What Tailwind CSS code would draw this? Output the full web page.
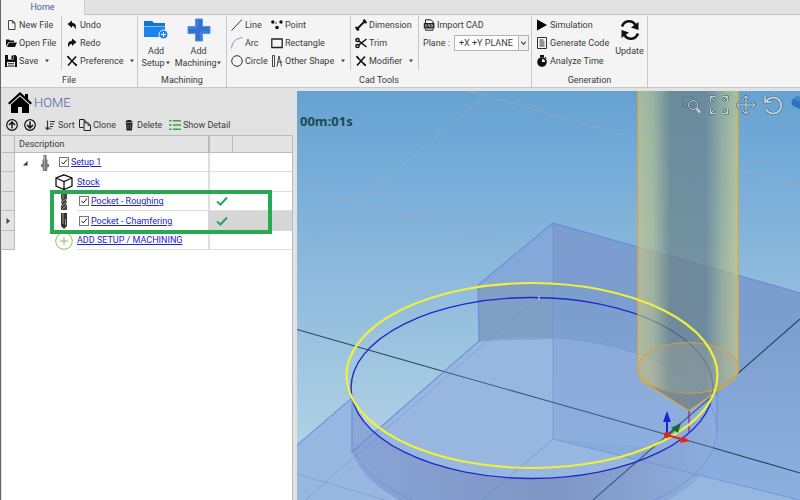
<!DOCTYPE html>
<html lang="en">
<head>
  <meta charset="UTF-8" />
  <meta name="viewport" content="width=device-width, initial-scale=1.0" />
  <title>CAM Workspace</title>
  <script src="https://cdn.jsdelivr.net/npm/@tailwindcss/browser@4"></script>
</head>
<body class="h-screen flex flex-col overflow-hidden bg-[#e2e2e2] border-l border-[#666] font-['Roboto','Noto_Sans',sans-serif] text-[9px] leading-3 text-[#3a3a3a]">
  <!-- Shared symbols -->
  <svg class="hidden">
    <symbol id="caret" viewBox="0 0 6 4"><path d="M1 0.5h4L3 3.2z" fill="#444" /></symbol>
    <symbol id="tools" viewBox="0 0 12 12"><path d="M2 10.5 10 1.500M2 2l8.500 8.500" stroke="#111" stroke-width="1.6" fill="none" /><path d="M.8 1.500 2.500.8 4 3 3 4zM8 9l1-1 2.300 2-1 1.300z" fill="#111" /></symbol>
    <symbol id="tick" viewBox="0 0 12 10"><path d="M1 5.500 4.500 8.500 11 1.500" stroke="#27a567" stroke-width="2" fill="none" /></symbol>
    <symbol id="check" viewBox="0 0 10 10"><path d="M2.500 5 4.300 7 8 2.500" stroke="#222" fill="none" /></symbol>
    <symbol id="cad" viewBox="0 0 12 12"><path d="M2.500 4V.8h5.500L10 2.800V4M2.500 10v1.200h7.500V10" fill="none" stroke="#222" /><path d="M.8 4h10.600v5.500H.8z" fill="#222" /><path d="M4 5.700H2.500v2H4M5.200 8V5.500h1.300V8M8 5.500v2.300h1.500V5.700z" stroke="#ddd" stroke-width=".6" fill="none" /></symbol>
  </svg>

  <!-- Tabs -->
  <nav class="flex h-[15px] shrink-0 bg-[#e2e2e2]">
    <a href="#" class="w-[84px] border-r border-[#ccc] bg-[#f4f4f4] text-center leading-[15px] text-[#3f5c96] z-10">Home</a>
    <div class="flex-1 border-b border-[#c4c4c4]"></div>
  </nav>

  <!-- Ribbon -->
  <header class="flex h-[73px] shrink-0 bg-[#f4f4f4] border-b border-[#c8c8c8]">
    <!-- File -->
    <section class="flex w-[137px] mt-px flex-col border-r border-[#c8c8c8]">
      <div class="flex h-[54px]">
        <div class="w-[61px] border-r border-[#c8c8c8] pl-1 grid grid-rows-3">
          <button class="flex items-center gap-0.5"><svg class="w-3 h-3" viewBox="0 0 12 12"><path d="M3.500 1.500h4L10 4v6.500H3.500zM7.500 1.500V4H10" fill="none" stroke="#444" /></svg>New File</button>
          <button class="flex items-center gap-0.5"><svg class="w-3 h-3" viewBox="0 0 12 12"><path d="M1 9.500V2.500h3l1 1h4V5H3.500zM2 10l2-4.500h8L10 10z" fill="#111" /></svg>Open File</button>
          <button class="flex items-center gap-0.5"><svg class="w-3 h-3" viewBox="0 0 12 12"><path d="M0 0h10.500L12 1.500V12H0z" fill="#111" /><path d="M3 0h5.500v4.500H3zM2 7h8v4.500H2z" fill="#f4f4f4" /><path d="M6.500.5h1.500V4H6.500zM3 8h6v.8H3zM3 9.800h6v.8H3z" fill="#111" /></svg>Save<svg class="w-1.5 h-1 ml-1"><use href="#caret" /></svg></button>
        </div>
        <div class="pl-1 grid grid-rows-3">
          <button class="flex items-center gap-0.5"><svg class="w-3 h-3" viewBox="0 0 12 12"><path d="M1.500 5 6 1.500v2.300c3 .2 4.500 2 3.800 5.700L9 10c0-2-1-3-3-3v2z" fill="#111" /></svg>Undo</button>
          <button class="flex items-center gap-0.5"><svg class="w-3 h-3" viewBox="0 0 12 12"><path d="M10.500 5 6 1.500v2.300C3 4 1.500 5.800 2.200 9.500L3 10c0-2 1-3 3-3v2z" fill="#111" /></svg>Redo</button>
          <button class="flex items-center gap-0.5"><svg class="w-3 h-3"><use href="#tools" /></svg>Preference<svg class="w-1.5 h-1 ml-1"><use href="#caret" /></svg></button>
        </div>
      </div>
      <div class="h-[17px] pt-1 text-center">File</div>
    </section>

    <!-- Machining -->
    <section class="flex w-[89px] mt-px flex-col border-r border-[#c8c8c8]">
      <div class="flex h-[54px] justify-center gap-1">
        <button class="flex flex-col items-center pt-0.5">
          <svg class="w-6 h-6 mb-[3px] shrink-0" viewBox="0 0 24 24"><path d="M0 3h8l2 2h11v3H0z" fill="#1173d8" /><path d="M0 8.500h21V19H0z" fill="#1a83f0" /><circle cx="19.500" cy="16.500" r="4.500" fill="#1a83f0" stroke="#f4f4f4" /><path d="M19.500 14v5M17 16.500h5" stroke="#fff" /></svg>
          <span>Add</span><span class="flex items-center">Setup<svg class="w-1.5 h-1"><use href="#caret" /></svg></span>
        </button>
        <button class="flex flex-col items-center pt-0.5">
          <svg class="w-6 h-6 mb-[3px] shrink-0" viewBox="0 0 24 24"><path d="M8.500 1h7v7.500H23v7h-7.500V23h-7v-7.500H1v-7h7.500z" fill="#3272d6" stroke="#5b8fe0" /><path d="M10 2v8H2M22 14h-8v8" fill="none" stroke="#4f8ae6" /></svg>
          <span>Add</span><span class="flex items-center">Machining<svg class="w-1.5 h-1"><use href="#caret" /></svg></span>
        </button>
      </div>
      <div class="h-[17px] pt-1 text-center">Machining</div>
    </section>

    <!-- Cad Tools -->
    <section class="flex w-[305px] mt-px flex-col border-r border-[#c8c8c8]">
      <div class="flex h-[54px]">
        <div class="w-10 pl-1 grid grid-rows-3">
          <button class="flex items-center gap-0.5"><svg class="w-3 h-3" viewBox="0 0 12 12"><path d="M.5 11.500 11 .5" stroke="#333" /></svg>Line</button>
          <button class="flex items-center gap-0.5"><svg class="w-3 h-3" viewBox="0 0 12 12"><path d="M.5 11.500C1 5 5 1 11.500.8" stroke="#8b93c0" fill="none" /></svg>Arc</button>
          <button class="flex items-center gap-0.5"><svg class="w-3 h-3" viewBox="0 0 12 12"><circle cx="6" cy="6" r="5.300" stroke="#333" fill="none" /></svg>Circle</button>
        </div>
        <div class="w-[84px] pl-1 border-r border-[#c8c8c8] grid grid-rows-3">
          <button class="flex items-center gap-0.5"><svg class="w-3 h-3" viewBox="0 0 12 12"><g fill="#111"><circle cx="1.800" cy="3" r="1.700" /><circle cx="10" cy="3" r="1.700" /><circle cx="6" cy="8.500" r="1.800" /><circle cx="5" cy="4" r=".7" /></g></svg>Point</button>
          <button class="flex items-center gap-0.5"><svg class="w-3 h-3" viewBox="0 0 12 12"><path d="M.8 2h10.400v8.500H.8z" stroke="#222" stroke-width="1.300" fill="none" /></svg>Rectangle</button>
          <button class="flex items-center gap-0.5"><svg class="w-3 h-3" viewBox="0 0 12 12"><path d="M1.500.5h2v11h-2zM6 11.500 8 1l2.500 10.500M6.500 7h5" stroke="#444" fill="none" /></svg>Other Shape<svg class="w-1.5 h-1 ml-1"><use href="#caret" /></svg></button>
        </div>
        <div class="w-[68px] pl-1 border-r border-[#c8c8c8] grid grid-rows-3">
          <button class="flex items-center gap-0.5"><svg class="w-3 h-3" viewBox="0 0 12 12"><path d="M2.500 9.500l7-7" stroke="#111" stroke-width="1.800" /><circle cx="9.300" cy="1.800" r="1.500" fill="#111" /><circle cx="10.500" cy="3.200" r="1.300" fill="#111" /><circle cx="1.500" cy="8.800" r="1.300" fill="#111" /><circle cx="2.800" cy="10.300" r="1.500" fill="#111" /></svg>Dimension</button>
          <button class="flex items-center gap-0.5"><svg class="w-3 h-3" viewBox="0 0 12 12"><g fill="none" stroke="#111" stroke-width="1.500"><circle cx="2.500" cy="3" r="1.600" /><circle cx="2.500" cy="9" r="1.600" /><path d="M4 4.200 11.500 10M4 7.800 11.500 2" /></g></svg>Trim</button>
          <button class="flex items-center gap-0.5"><svg class="w-3 h-3"><use href="#tools" /></svg>Modifier<svg class="w-1.5 h-1 ml-1"><use href="#caret" /></svg></button>
        </div>
        <div class="flex-1 pl-1 grid grid-rows-3">
          <button class="flex items-center gap-0.5"><svg class="w-3 h-3"><use href="#cad" /></svg>Import CAD</button>
          <div class="flex items-center">
            <label for="plane" class="w-[31px]">Plane :</label>
            <div class="relative flex h-4 w-[75px]">
              <select id="plane" class="w-full appearance-none border border-[#b4b4b4] bg-white pl-1 leading-3"><option>+X +Y PLANE</option></select>
              <svg class="absolute right-px top-px h-3.5 w-2.5 border-l border-[#b4b4b4] bg-[#f0f0f0] pointer-events-none" viewBox="0 0 10 14"><path d="M2.500 5.500 5 8.500l2.500-3" fill="none" stroke="#444" stroke-width="1.200" /></svg>
            </div>
          </div>
        </div>
      </div>
      <div class="h-[17px] pt-1 text-center">Cad Tools</div>
    </section>

    <!-- Generation -->
    <section class="flex w-[116px] mt-px flex-col border-r border-[#c8c8c8]">
      <div class="flex h-[54px]">
        <div class="w-[80px] pl-1 grid grid-rows-3">
          <button class="flex items-center gap-0.5"><svg class="w-3 h-3" viewBox="0 0 12 12"><path d="M1 .5 11 6 1 11.500z" fill="#000" /></svg>Simulation</button>
          <button class="flex items-center gap-0.5"><svg class="w-3 h-3" viewBox="0 0 12 12"><path d="M1.500.5h9v11h-9zM3.500 3h4M3.500 5h5M3.500 7h5M3.500 9h5" stroke="#333" fill="none" /></svg>Generate Code</button>
          <button class="flex items-center gap-0.5"><svg class="w-3 h-3" viewBox="0 0 12 12"><circle cx="6" cy="7" r="4.800" fill="#111" /><path d="M4.500 0h3v2h-3zM9 2l1.500 1.500" fill="#111" stroke="#111" /><path d="M6 7V4a3 3 0 0 1 3 3z" fill="#f4f4f4" /></svg>Analyze Time</button>
        </div>
        <button class="flex flex-1 flex-col items-center pt-0.5">
          <svg class="w-6 h-6 mb-[3px] shrink-0" viewBox="0 0 24 24"><g fill="none" stroke="#111" stroke-width="2.600"><path d="M4 8.500C6.500 2 14 1.500 17.500 7" /><path d="M20 15.500C17.500 22 10 22.500 6.500 17" /></g><path d="M20.500 4v8l-7.500-2.500zM3.500 20v-8l7.500 2.500z" fill="#111" /></svg>
          <span>Update</span>
        </button>
      </div>
      <div class="h-[17px] pt-1 text-center">Generation</div>
    </section>
  </header>

  <div class="flex min-h-0 flex-1 pt-[3px]">
    <!-- Operations panel -->
    <aside class="flex w-[296px] shrink-0 flex-col pl-px pr-1">
      <h1 class="flex h-6 items-center gap-0.5 pl-1.5 text-[13px] font-light text-[#4a65a0]">
        <svg class="w-6 h-6" viewBox="0 0 24 24"><path d="M12 1 0 12l1.500 1.500L12 4l10.500 9.500L24 12l-4-3.700V3h-3v2.500z" fill="#000" /><path d="M12 5.500 3 13.500V22h7v-6h4v6h7v-8.500z" fill="#000" /></svg>HOME</h1>
      <div class="flex h-5 items-center pl-1">
        <button aria-label="Move up" class="w-[18px]"><svg class="w-3 h-3" viewBox="0 0 12 12"><circle cx="6" cy="6" r="5.300" fill="none" stroke="#111" stroke-width="1.200" /><path d="M6 9.500V3M3 6l3-3 3 3" fill="none" stroke="#111" stroke-width="1.500" /></svg></button>
        <button aria-label="Move down" class="w-5"><svg class="w-3 h-3" viewBox="0 0 12 12"><circle cx="6" cy="6" r="5.300" fill="none" stroke="#111" stroke-width="1.200" /><path d="M6 2.500V9M3 6l3 3 3-3" fill="none" stroke="#111" stroke-width="1.500" /></svg></button>
        <button class="flex w-[35px] items-center gap-0.5"><svg class="w-3 h-3" viewBox="0 0 12 12"><path d="M3.500 1.500v9M1.500 8.500l2 2 2-2M6 2.500h5M6 5h4M6 7.500h3M6 10h1.500" stroke="#333" stroke-width="1.200" fill="none" /></svg>Sort</button>
        <button class="flex w-[44px] items-center gap-0.5"><svg class="w-3 h-3" viewBox="0 0 12 12"><path d="M4.500 8.500H.5V.5h4.500L7 2.500V3.500M5 .5v2.300h2M5 3.800h4l2.500 2.400v5.300H5zM9 3.800v2.400h2.500" stroke="#222" fill="none" /></svg>Clone</button>
        <button class="flex w-[46px] items-center gap-0.5"><svg class="w-3 h-3" viewBox="0 0 12 12"><path d="M2.500 2.500 4.500 1h3l2 1.500v1h-7zM3 4h6.500l-.5 7.500H3.500z" fill="#222" /><path d="M5 5.500v4.500M7.300 5.500v4.500" stroke="#777" stroke-width=".8" /></svg>Delete</button>
        <button class="flex items-center gap-0.5"><svg class="w-3 h-3" viewBox="0 0 12 12"><path d="M0 1.800h2.500M0 6h2.500M0 10.200h2.500M3.800 1.800H12M3.800 6H12M3.800 10.200H12" stroke="#3aa546" stroke-width="1.600" /></svg>Show Detail</button>
      </div>

      <div class="relative flex-1 bg-white border-r border-[#bbb]">
        <table class="w-full table-fixed border-separate border-spacing-0">
          <colgroup><col class="w-[13px]" /><col class="w-[193px]" /><col class="w-[25px]" /><col /></colgroup>
          <thead>
            <tr class="h-[18px] bg-[#e4e4e4] text-left">
              <th class="border-y border-r border-[#bbb]"></th>
              <th class="border-y border-[#bbb] p-0 pl-1 font-normal">Description</th>
              <th class="border-y border-r border-[#bbb] border-l-2"></th>
              <th class="border-y border-[#bbb]"></th>
            </tr>
          </thead>
          <tbody>
            <tr class="h-[19px]">
              <td class="border-r border-b border-[#bbb] bg-[#e4e4e4] p-0"></td>
              <td class="p-0 pl-2"><div class="flex h-[19px] items-center">
                <svg class="w-4 h-2" viewBox="0 0 16 8"><path d="M4.500 2v4.500H0z" fill="#333" /></svg>
                <svg class="w-3 h-4 mr-2" viewBox="0 0 12 16"><path d="M4.500 0h3v4l1 1v4H10v3H8.500L8 16H4l-.5-4H2V9h1.500V5l1-1z" fill="#777" /><path d="M5.500 1v14" stroke="#aaa" /></svg>
                <span class="flex h-[19px] flex-1 items-center gap-0.5 border-b border-[#ddd]"><span class="relative flex"><input type="checkbox" checked aria-labelledby="setup" class="h-2.5 w-2.5 appearance-none border border-[#777] bg-white" /><svg class="absolute inset-0 h-2.5 w-2.5 pointer-events-none"><use href="#check" /></svg></span><a id="setup" href="#" class="text-[#2222cc] underline">Setup 1</a></span>
              </div></td>
              <td class="border-l-2 border-b border-[#ddd] p-0"></td><td class="border-b border-[#ddd] p-0"></td>
            </tr>
            <tr class="h-5">
              <td class="border-r border-b border-[#bbb] bg-[#e4e4e4] p-0"></td>
              <td class="p-0 pl-10"><div class="flex h-5 items-center gap-1">
                <svg class="w-[18px] h-4" viewBox="0 0 18 16"><path d="M9 .8 17 4v8l-8 3.500L1 12V4zM1 4l8 3.500L17 4M9 7.500v8" fill="none" stroke="#111" stroke-width="1.300" /></svg>
                <span class="flex h-5 flex-1 items-center border-b border-[#ddd]"><a href="#" class="text-[#2222cc] underline">Stock</a></span>
              </div></td>
              <td class="border-l-2 border-b border-[#ddd] p-0"></td><td class="border-b border-[#ddd] p-0"></td>
            </tr>
            <tr class="h-[19px]">
              <td class="border-r border-b border-[#bbb] bg-[#e4e4e4] p-0"></td>
              <td class="p-0 pl-10"><div class="flex h-[19px] items-center gap-1">
                <svg class="w-[18px] h-4" viewBox="0 0 18 16"><path d="M6 0h6v5l-1 1 1 2-1 2 1 2v4H6v-4l1-2-1-2 1-2-1-1z" fill="#444" /><path d="M7 8l4-3M7 12l4-3.500M7 15l4-3M8 0v5" stroke="#888" /></svg>
                <span class="flex h-[19px] flex-1 items-center gap-0.5 border-b border-[#ddd] pl-0.5"><span class="relative flex"><input type="checkbox" checked aria-labelledby="rough" class="h-2.5 w-2.5 appearance-none border border-[#777] bg-white" /><svg class="absolute inset-0 h-2.5 w-2.5 pointer-events-none"><use href="#check" /></svg></span><a id="rough" href="#" class="text-[#2222cc] underline">Pocket - Roughing</a></span>
              </div></td>
              <td class="border-l-2 border-b border-[#ddd] p-0 pl-1.5"><svg class="w-3 h-2.5"><use href="#tick" /></svg></td><td class="border-b border-[#ddd] p-0"></td>
            </tr>
            <tr class="h-5">
              <td class="border-r border-b border-[#bbb] bg-[#e4e4e4] p-0"><svg class="mx-auto w-1 h-1.5" viewBox="0 0 4 6"><path d="M.5 0 4 3 .5 6z" fill="#444" /></svg></td>
              <td class="p-0 pl-10"><div class="flex h-5 items-center gap-1">
                <svg class="w-[18px] h-4" viewBox="0 0 18 16"><path d="M6 0h6v13l-3 3-3-3z" fill="#333" /><path d="M8 0v11M10.500 6v6" stroke="#999" /></svg>
                <span class="flex h-5 flex-1 items-center gap-0.5 border-b border-[#ddd] pl-0.5"><span class="relative flex"><input type="checkbox" checked aria-labelledby="chamfer" class="h-2.5 w-2.5 appearance-none border border-[#777] bg-white" /><svg class="absolute inset-0 h-2.5 w-2.5 pointer-events-none"><use href="#check" /></svg></span><a id="chamfer" href="#" class="text-[#2222cc] underline">Pocket - Chamfering</a></span>
              </div></td>
              <td class="border-l-2 border-[#d6d6d6] bg-[#d6d6d6] p-0 pl-1.5"><svg class="w-3 h-2.5"><use href="#tick" /></svg></td><td class="bg-[#d6d6d6] p-0"></td>
            </tr>
            <tr class="h-[19px]">
              <td class="border-r border-b border-[#bbb] bg-[#e4e4e4] p-0"></td>
              <td class="p-0 pl-10"><div class="flex h-[19px] items-center gap-1">
                <svg class="w-[18px] h-[18px]" viewBox="0 0 18 18"><circle cx="9" cy="9" r="8.300" fill="#fff" stroke="#8dc05a" /><path d="M9 5v8M5 9h8" stroke="#8dc05a" /></svg>
                <span class="flex h-[19px] flex-1 items-center border-b border-[#ddd]"><a href="#" class="text-[#2222cc] underline">ADD SETUP / MACHINING</a></span>
              </div></td>
              <td class="border-l-2 border-b border-[#ddd] p-0"></td><td class="border-b border-[#ddd] p-0"></td>
            </tr>
          </tbody>
        </table>
        <!-- Highlight over the two pocket operations -->
        <div class="absolute left-12 top-[55px] h-11 w-[222px] border-4 border-[#27a94f] pointer-events-none"></div>
      </div>
    </aside>

    <!-- 3D viewport -->
    <main class="relative min-w-0 flex-1 overflow-hidden">
      <svg class="block h-full w-full" viewBox="297 91 503 409" preserveAspectRatio="xMinYMin slice">
        <defs>
          <linearGradient id="sky" x1="0" y1="0" x2="0" y2="1"><stop offset="0" stop-color="#66a2d1" /><stop offset=".15" stop-color="#72aad8" /><stop offset=".5" stop-color="#92bcdd" /><stop offset="1" stop-color="#bcd9e8" /></linearGradient>
          <linearGradient id="right" x1="0" y1="0" x2="0" y2="1"><stop offset="0" stop-color="#7d9bcf" /><stop offset=".35" stop-color="#7c9fcf" /><stop offset="1" stop-color="#8cb0e0" /></linearGradient>
          <linearGradient id="front" x1="0" y1="0" x2="1" y2="0"><stop offset="0" stop-color="#86a0d6" /><stop offset=".55" stop-color="#7b90bf" /><stop offset="1" stop-color="#8cadde" /></linearGradient>
          <linearGradient id="tool" x1="0" y1="0" x2="1" y2="0"><stop offset="0" stop-color="#d0cb80" stop-opacity=".62" /><stop offset=".15" stop-color="#b4bd88" stop-opacity=".65" /><stop offset=".32" stop-color="#6b8080" stop-opacity=".68" /><stop offset=".68" stop-color="#688088" stop-opacity=".68" /><stop offset=".85" stop-color="#a4b388" stop-opacity=".65" /><stop offset="1" stop-color="#d3cf80" stop-opacity=".65" /></linearGradient>
          <clipPath id="floorArea"><path d="M352 452 479 341 553 337H760V520H352z" /></clipPath>
        </defs>
        <rect x="297" y="91" width="503" height="409" fill="url(#sky)" />
        <g stroke="#a3aeb0" stroke-opacity=".5" fill="none"><path d="M487 95 363 198 297 255M470 91 800 186M300 187 523 248M775 91 610 235" /></g>

        <!-- Stock block -->
        <path d="M297 445 352 398V452L479 341 553 337 800 400V500H297z" fill="#97b6e0" />
        <path d="M478 285 553 223V339L479 341z" fill="#84a9d9" />
        <path d="M478 286Q515 282 553 284V337Q510 337 479 341z" fill="#809fc5" />
        <path d="M553 223 800 293V501L553 439z" fill="url(#right)" />
        <path d="M553 337A184 93 0 0 1 717 430L712 452 553 439z" fill="#92b2e0" fill-opacity=".6" />
        <path d="M352 398A181 90.500 0 0 0 713 388H717V430A184 93 0 0 1 352 452z" fill="url(#front)" fill-opacity=".85" />
        <g fill="none" stroke="#6088da" stroke-opacity=".7">
          <path d="M297 445 352 398V452L479 341 478 285 553 223 800 293" stroke-width="1.300" />
          <path d="M717 385V430" />
          <path d="M553 223V439L482 500M553 439 800 500" stroke-opacity=".5" />
          <ellipse cx="533" cy="430" rx="184" ry="93" clip-path="url(#floorArea)" stroke-opacity=".55" />
        </g>
        <path d="M297 474 385 500M305 500 553 284" stroke="#7088b0" stroke-opacity=".35" fill="none" />
        <path d="M297 329.500 442 371M800 473 714 448M800 319 735 376" stroke="#26495c" fill="none" stroke-width="1.200" />
        <path d="M442 371 714 448M735 376 593 500" stroke="#3f5f80" fill="none" stroke-width="1.100" />

        <!-- Toolpath and cutter -->
        <ellipse cx="532" cy="388" rx="181" ry="90.500" fill="none" stroke="#2028c8" stroke-width="1.400" />
        <path d="M638 91V372Q640 379 646 384L689 411 729 383Q737 377 738 372V91z" fill="url(#tool)" />
        <ellipse cx="688" cy="368" rx="50" ry="25.500" fill="#a8aa98" fill-opacity=".3" stroke="#d5a244" stroke-width="1.200" />
        <path d="M646 384 689 411 712 392Q680 398 646 384z" fill="#7b8893" fill-opacity=".7" />
        <path d="M638 91V372Q640 379 646 384L689 411 729 383Q737 377 738 372V91" fill="none" stroke="#d2ac48" stroke-width="1.400" />
        <path d="M689 411V432" stroke="#8a2090" stroke-width="1.200" />
        <ellipse cx="532" cy="375.500" rx="185.500" ry="92.500" fill="none" stroke="#eff03c" stroke-width="2.200" />
        <path d="M539 295.500v4" stroke="#dde" />

        <!-- Origin axes -->
        <path d="M667 435V419" stroke="#2020e0" stroke-width="2" /><path d="M667 411 671 422H663z" fill="#2020e0" />
        <path d="M668 435 676 428" stroke="#126b32" stroke-width="2" /><path d="M681 423 678 433 671 428z" fill="#126b32" />
        <path d="M667 435 681 439" stroke="#e82222" stroke-width="2" /><path d="M690 441 680 443 682 436z" fill="#e82222" /><circle cx="667" cy="435" r="3" fill="#d22" />
      </svg>
      <div class="absolute left-[3px] top-[22px] font-['Open_Sans',sans-serif] text-[13px] font-bold leading-4 text-[#1b4a50]">00m:01s</div>
      <div class="absolute -right-2.5 top-1 flex gap-[7px]">
        <button aria-label="Zoom window"><svg class="w-5 h-5" viewBox="0 0 20 20" fill="none"><path d="M1 2h10v10H1z" stroke="#5c7680" stroke-dasharray="2 1" /><circle cx="11" cy="10" r="4.500" stroke="#506a75" stroke-width="2.500" /><circle cx="11" cy="10" r="4.500" stroke="#c8d5da" /><path d="M14.500 13.500 18 17.500" stroke="#c8d5da" stroke-width="2" /></svg></button>
        <button aria-label="Fit"><svg class="w-5 h-5" viewBox="0 0 20 20" fill="none"><path d="M1.500 6V1.500H6M2 2l4 4M14 1.500h4.500V6M18 2l-4 4M1.500 14v4.500H6M2 18l4-4M14 18.500h4.500V14M18 18l-4-4" stroke="#5c7680" stroke-width="2.500" /><path d="M1.500 6V1.500H6M2 2l4 4M14 1.500h4.500V6M18 2l-4 4M1.500 14v4.500H6M2 18l4-4M14 18.500h4.500V14M18 18l-4-4" stroke="#c8d5da" /></svg></button>
        <button aria-label="Pan"><svg class="w-5 h-5" viewBox="0 0 20 20" fill="none"><path d="M10 1v18M1 10h18M7 4l3-3 3 3M7 16l3 3 3-3M4 7l-3 3 3 3M16 7l3 3-3 3" stroke="#54748c" stroke-width="2.500" /><path d="M10 1v18M1 10h18M7 4l3-3 3 3M7 16l3 3 3-3M4 7l-3 3 3 3M16 7l3 3-3 3" stroke="#d3dfe8" /></svg></button>
        <button aria-label="Rotate"><svg class="w-5 h-5" viewBox="0 0 20 20" fill="none"><path d="M3.500 6A8 8 0 1 1 3 14M2 1.500V7h6" stroke="#54748c" stroke-width="3" /><path d="M3.500 6A8 8 0 1 1 3 14M2 1.500V7h6" stroke="#d3dfe8" stroke-width="1.500" /></svg></button>
        <button aria-label="View cube"><svg class="w-5 h-5" viewBox="0 0 20 20"><path d="M3 4 7 1 20 6V18L3 11Q0 7 3 4z" fill="#2c72bd" /><path d="M3 4 7 1 20 6V10z" fill="#4389d0" /></svg></button>
      </div>
    </main>
  </div>
</body>
</html>
